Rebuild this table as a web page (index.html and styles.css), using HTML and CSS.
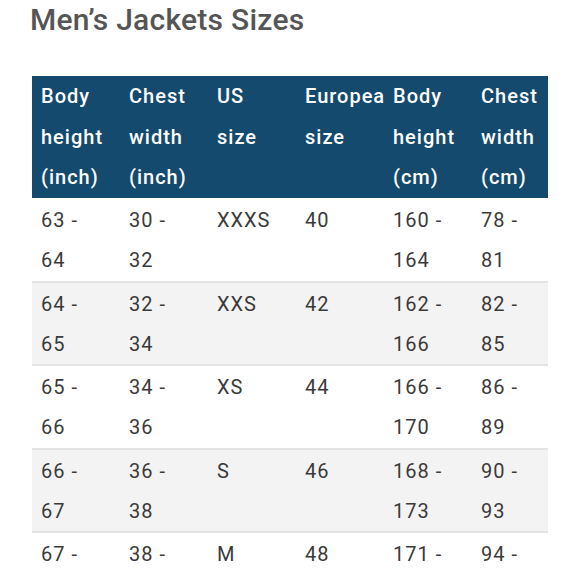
FILE: index.html
```html
<!DOCTYPE html>
<html lang="en">
<head>
<meta charset="utf-8">
<title>Men’s Jackets Sizes</title>
<link rel="stylesheet" href="styles.css">
</head>
<body>
<div class="page">
  <h1 class="title">Men’s Jackets Sizes</h1>
  <table class="sizes">
    <colgroup>
      <col class="c"><col class="c"><col class="c"><col class="c"><col class="c"><col class="c-last">
    </colgroup>
    <thead>
      <tr>
        <th>Body height (inch)</th>
        <th>Chest width (inch)</th>
        <th>US size</th>
        <th>European size</th>
        <th>Body height (cm)</th>
        <th>Chest width (cm)</th>
      </tr>
    </thead>
    <tbody>
      <tr><td>63 - 64</td><td>30 - 32</td><td>XXXS</td><td>40</td><td>160 - 164</td><td>78 - 81</td></tr>
      <tr><td>64 - 65</td><td>32 - 34</td><td>XXS</td><td>42</td><td>162 - 166</td><td>82 - 85</td></tr>
      <tr><td>65 - 66</td><td>34 - 36</td><td>XS</td><td>44</td><td>166 - 170</td><td>86 - 89</td></tr>
      <tr><td>66 - 67</td><td>36 - 38</td><td>S</td><td>46</td><td>168 - 173</td><td>90 - 93</td></tr>
      <tr><td>67 - 68</td><td>38 - 40</td><td>M</td><td>48</td><td>171 - 175</td><td>94 - 97</td></tr>
    </tbody>
  </table>
</div>
</body>
</html>
```

FILE: styles.css
```css
html, body {
  margin: 0;
  padding: 0;
  background: #ffffff;
}

.page {
  padding: 2px 0 0 32px;
  font-family: Roboto, "Liberation Sans", sans-serif;
}

.title {
  margin: 0 0 38px -2px;
  font-size: 30px;
  line-height: 36px;
  font-weight: 500;
  color: #555555;
  letter-spacing: 0.25px;
}

.sizes {
  width: 516px;
  table-layout: fixed;
  border-collapse: collapse;
  border-spacing: 0;
  font-size: 20px;
  letter-spacing: 1px;
}

.sizes .c {
  width: 88px;
}

.sizes th,
.sizes td {
  text-align: left;
  vertical-align: top;
  overflow: hidden;
  padding: 0 14px 0 9px;
}

.sizes th:last-child,
.sizes td:last-child {
  padding-right: 8px;
}

.sizes thead tr {
  background: #144a6d;
}

.sizes th {
  color: #ffffff;
  font-weight: 500;
  line-height: 40.5px;
}

.sizes td {
  color: #3a3a3a;
  font-weight: 400;
  line-height: 40.3px;
  padding-top: 1px;
  border-bottom: 2px solid #e4e4e4;
}

.sizes tbody tr:first-child td {
  padding-top: 2.5px;
}

.sizes tbody tr:nth-child(even) {
  background: #f3f3f3;
}
```
